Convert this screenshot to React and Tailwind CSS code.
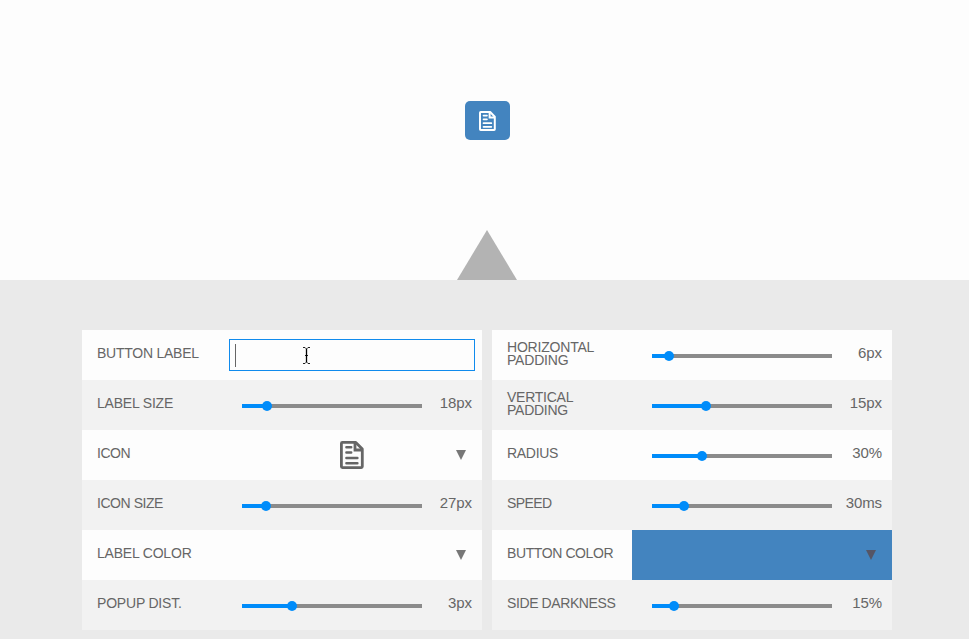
import React from "react";

function DocIcon({ className, weight = 2.4 }) {
  return (
    <svg viewBox="0 0 24 28" className={className} fill="none" stroke="currentColor" strokeWidth={weight}>
      <path d="M1.4 2.4Q1.4 1.4 2.4 1.4H15.8L22.3 7.9V25.6Q22.3 26.6 21.3 26.6H2.4Q1.4 26.6 1.4 25.6Z" strokeLinejoin="round" />
      <path d="M15 1.5V9H22.4" />
      <path d="M6.4 6.3H11.2M6.4 11.6H11.2M6.4 17H17.4M6.4 22.2H17.4" strokeLinecap="round" strokeWidth={weight * 0.88} />
    </svg>
  );
}

function Slider({ pos }) {
  return (
    <div className="relative ml-auto mt-6 h-1 w-[180px] shrink-0 bg-[#8b8b8b]">
      <div className="h-1 bg-[#008cfa]" style={{ width: pos }} />
      <div className="absolute -top-[3px] size-[10px] -translate-x-1/2 rounded-full bg-[#008cfa]" style={{ left: pos }} />
    </div>
  );
}

function Arrow({ className }) {
  return (
    <svg viewBox="0 0 10 10" className={`mt-5 size-[10px] ${className}`} fill="currentColor">
      <path d="M0 0H10L5 10Z" />
    </svg>
  );
}

function Row({ label, track, shade, value, pos, children }) {
  return (
    <div className={`flex h-[50px] items-start pl-[15px] ${shade ? "bg-[#f2f2f2]" : "bg-[#fdfdfd]"}`}>
      <div className={`shrink-0 whitespace-pre ${track} ${label.includes("\n") ? "mt-[11px] leading-[13px]" : "mt-[15px] leading-4"}`}>
        {label}
      </div>
      {value && (
        <>
          <Slider pos={pos} />
          <div className="mr-[10px] mt-[15px] w-[50px] text-right text-[15px] leading-4 tracking-[-0.1px]">{value}</div>
        </>
      )}
      {children}
    </div>
  );
}

export default function App() {
  return (
    <div className="h-[639px] w-[969px] overflow-hidden bg-[#eaeaea] font-['Liberation_Sans',Arial,sans-serif] text-[14px] text-[#666]">
      <div className="flex h-[280px] flex-col items-center bg-[#fdfdfd] pt-[101px]">
        <button className="ml-[6px] flex h-[39px] w-[45px] items-center justify-center rounded-[5px] bg-[#4384bf] text-white">
          <DocIcon className="mr-px h-5 w-[17px]" weight={2.8} />
        </button>
        <svg viewBox="0 0 60 50" className="ml-[5px] mt-auto h-[50px] w-[60px] shrink-0" fill="#b3b3b3">
          <path d="M30 0L60 50H0Z" />
        </svg>
      </div>
      <div className="flex gap-[10px] pl-[82px] pt-[50px]">
        <div className="w-[400px]">
          <Row label="BUTTON LABEL" track="tracking-[-0.25px]">
            <div className="relative ml-auto mr-[7px] mt-[9px] h-8 w-[246px] border border-[#108bed] bg-[#fdfdfd] pl-[5px] pt-1">
              <div className="h-[23px] w-px bg-[#666]" />
              <svg viewBox="0 0 9 17" className="absolute left-[72px] top-[7px] h-[17px] w-[9px]" fill="none" stroke="#222" strokeWidth="1">
                <path d="M1 .5H3L4.5 2L6 .5H8M3 8.5H6M1 16.5H3L4.5 15L6 16.5H8" />
                <path d="M4.5 2V15" stroke="#000" strokeWidth="1.3" />
              </svg>
            </div>
          </Row>
          <Row label="LABEL SIZE" track="tracking-[-0.2px]" shade value="18px" pos="25px" />
          <Row label="ICON" track="tracking-[-0.5px]">
            <div className="flex grow justify-end pr-4">
              <DocIcon className="mr-[92px] mt-[11px] h-7 w-6" weight={2.8} />
              <Arrow className="text-[#777]" />
            </div>
          </Row>
          <Row label="ICON SIZE" track="tracking-[-0.45px]" shade value="27px" pos="24px" />
          <Row label="LABEL COLOR" track="tracking-[-0.2px]">
            <Arrow className="ml-auto mr-4 text-[#777]" />
          </Row>
          <Row label="POPUP DIST." track="tracking-[-0.2px]" shade value="3px" pos="50px" />
        </div>
        <div className="w-[400px]">
          <Row label={"HORIZONTAL\nPADDING"} track="tracking-[-0.2px]" value="6px" pos="17px" />
          <Row label={"VERTICAL\nPADDING"} track="tracking-[-0.25px]" shade value="15px" pos="54px" />
          <Row label="RADIUS" track="tracking-[-0.3px]" value="30%" pos="50px" />
          <Row label="SPEED" track="tracking-[-0.6px]" shade value="30ms" pos="32px" />
          <Row label="BUTTON COLOR" track="tracking-[-0.4px]">
            <div className="ml-auto flex h-[50px] w-[260px] justify-end bg-[#4384bf] pr-4">
              <Arrow className="text-[#555566]" />
            </div>
          </Row>
          <Row label="SIDE DARKNESS" track="tracking-[-0.4px]" shade value="15%" pos="22px" />
        </div>
      </div>
    </div>
  );
}
